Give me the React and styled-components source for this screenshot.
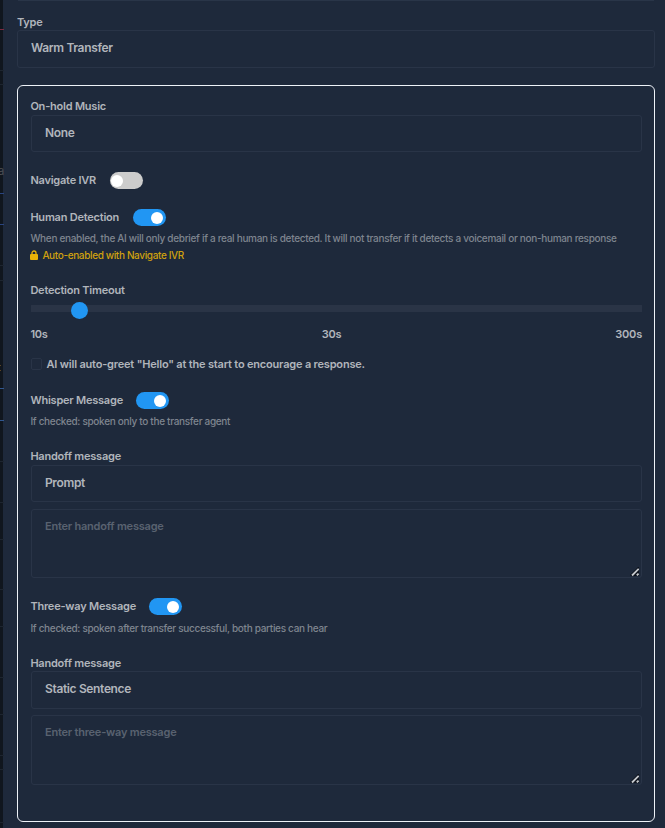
import React, { useState } from "react";
import styled, { createGlobalStyle } from "styled-components";

const Global = createGlobalStyle`
  * { box-sizing: border-box; }
  body { margin: 0; background: #1e293b; overflow: hidden; }
`;

const line = (y, color, width = 4) => `linear-gradient(${color}, ${color}) 0 ${y}px / ${width}px 1px no-repeat`;
const grey = [70, 84, 265, 280, 461, 502, 539, 589, 626, 677, 714, 755, 769, 822];

const Page = styled.div`
  display: grid;
  grid-template-columns: 4px minmax(0, 1fr);
  height: 828px;
  overflow: hidden;
  color: #b1b5bb;
  font: 600 11px/16px Inter, sans-serif;
  letter-spacing: -0.22px;
`;
const Backdrop = styled.div`
  display: flex;
  justify-content: flex-end;
  height: 828px;
  overflow: hidden;
  padding-top: 163px;
  color: #4c4f54;
  font-size: 11px;
  font-weight: 400;
  background: ${[
    line(29, "#7b2a41"),
    line(193, "#2a4580"),
    line(224, "#2a4580"),
    line(365, "#5b4426", 1),
    line(370, "#5b4426", 1),
    line(388, "#31578f"),
    line(420, "#31578f"),
    ...grey.map((y) => line(y, "#1d2530")),
    "linear-gradient(90deg, #10161e 3px, #1e293b 3px)",
  ].join(", ")};
`;
const Panel = styled.main`
  height: 828px;
  padding: 0 10px 0 13px;
`;
const PreviousField = styled.div`
  height: 1px;
  background: #293548;
  margin: 0 1px 13px;
`;
const Label = styled.div`
  height: 16px;
  margin-top: ${(p) => p.$top || 0}px;
  margin-bottom: ${(p) => p.$bottom || 0}px;
`;
const Select = styled.div`
  height: ${(p) => p.$height || 38}px;
  margin-left: ${(p) => p.$inset || 0}px;
  padding: 9px 13px;
  border: 1px solid #293447;
  border-radius: 3px;
  font-size: 12px;
  line-height: 16px;
  letter-spacing: -0.35px;
`;
const Card = styled.section`
  height: 737px;
  margin-top: 17px;
  padding: 12px 12px 0 12.4px;
  border: 1px solid #eef2f8;
  border-radius: 6px;
`;
const ToggleRow = styled.div`
  display: flex;
  align-items: center;
  height: 17px;
  gap: ${(p) => p.$gap}px;
  margin-top: ${(p) => p.$top}px;
`;
const ToggleLabel = styled.span`
  height: 17px;
`;
const Switch = styled.button`
  display: flex;
  justify-content: ${(p) => (p.$on ? "flex-end" : "flex-start")};
  align-items: center;
  width: 33px;
  height: 17px;
  padding: ${(p) => (p.$on ? "1px 3px 0" : "1px 1px 0")};
  border: 0;
  border-radius: 9px;
  background: ${(p) => (p.$on ? "#2196f3" : "#ccc")};
`;
const Knob = styled.span`
  width: 12px;
  height: 12px;
  border-radius: 50%;
  background: #fff;
`;
const Hint = styled.div`
  height: 14px;
  margin-top: ${(p) => p.$top}px;
  margin-bottom: ${(p) => p.$bottom || 0}px;
  color: #7e858f;
  font-size: 10px;
  font-weight: 550;
  line-height: 14px;
  letter-spacing: -0.31px;
  white-space: nowrap;
`;
const Notice = styled(Hint)`
  display: flex;
  align-items: center;
  gap: 4px;
  color: #d0a10e;
  letter-spacing: -0.36px;
`;
const Slider = styled.div`
  display: flex;
  align-items: center;
  height: 17px;
  margin: 4px 0 0 0.6px;
  padding-left: 40px;
  background: linear-gradient(#2a3446, #2a3446) 0 3px / 100% 7px no-repeat;
  border-radius: 4px;
`;
const Thumb = styled.span`
  width: 17px;
  height: 17px;
  border-radius: 50%;
  background: #2196f3;
`;
const Scale = styled.div`
  display: flex;
  justify-content: space-between;
  margin-top: 7px;
`;
const CheckRow = styled.label`
  display: flex;
  align-items: center;
  gap: 4.5px;
  height: 16px;
  margin: 14px 0 0 0.6px;
  letter-spacing: -0.19px;
  white-space: nowrap;
`;
const Check = styled.span`
  width: 11px;
  height: 12px;
  border: 1px solid #293447;
  border-radius: 2px;
`;
const Area = styled.div`
  display: flex;
  justify-content: space-between;
  align-items: flex-start;
  height: ${(p) => p.$height}px;
  margin: ${(p) => p.$top}px 0 0 0.6px;
  padding: 8px 2px 0 13px;
  border: 1px solid #293447;
  border-radius: 3px;
  color: #596270;
  font-size: 11px;
`;
const Grip = styled.svg`
  align-self: flex-end;
  width: 9px;
  height: 10px;
`;

function Toggle({ label, initial, top, gap = 13 }) {
  const [on, setOn] = useState(initial);
  return (
    <ToggleRow $top={top} $gap={gap}>
      <ToggleLabel>{label}</ToggleLabel>
      <Switch $on={on} onClick={() => setOn(!on)} aria-label={label}><Knob /></Switch>
    </ToggleRow>
  );
}

function TextArea({ text, height, top }) {
  return (
    <Area $height={height} $top={top}>
      <span>{text}</span>
      <Grip viewBox="0 0 9 10">
        <path d="M0 8 8 0H9V9H1Z" fill="#0b101a" />
        <path d="M2 8.5 8.7 1.8M6.8 8.4 8.6 6.6" stroke="#c4c7cc" strokeWidth="1.9" />
      </Grip>
    </Area>
  );
}

export default function App() {
  return (
    <Page>
      <Global />
      <Backdrop>a</Backdrop>
      <Panel>
        <PreviousField />
        <Label>Type</Label>
        <Select>Warm Transfer</Select>
        <Card>
          <Label $bottom={1}>On-hold Music</Label>
          <Select $height={37} $inset={0.6}>None</Select>
          <Toggle label="Navigate IVR" top={20} gap={13.7} />
          <Toggle label="Human Detection" initial top={20} gap={13.7} />
          <Hint $top={5} $bottom={1}>When enabled, the AI will only debrief if a real human is detected. It will not transfer if it detects a voicemail or non-human response</Hint>
          <Notice $top={3} $bottom={1}>
            <svg width="8" height="10" viewBox="0 0 8 10" aria-hidden="true">
              <path d="M2 5V3a2 2 0 0 1 4 0v2" fill="none" stroke="#eab308" strokeWidth="1.3" />
              <rect y="4" width="8" height="6" rx="1" fill="#eab308" />
            </svg>
            Auto-enabled with Navigate IVR
          </Notice>
          <Label $top={20}>Detection Timeout</Label>
          <Slider><Thumb /></Slider>
          <Scale><span>10s</span><span>30s</span><span>300s</span></Scale>
          <CheckRow><Check />AI will auto-greet "Hello" at the start to encourage a response.</CheckRow>
          <Toggle label="Whisper Message" initial top={20} />
          <Hint $top={5} $bottom={1}>If checked: spoken only to the transfer agent</Hint>
          <Label $top={20} $bottom={1}>Handoff message</Label>
          <Select $height={37} $inset={0.6}>Prompt</Select>
          <TextArea text="Enter handoff message" height={69} top={7} />
          <Toggle label="Three-way Message" initial top={20} />
          <Hint $top={6} $bottom={1}>If checked: spoken after transfer successful, both parties can hear</Hint>
          <Label $top={20}>Handoff message</Label>
          <Select $height={38} $inset={0.6}>Static Sentence</Select>
          <TextArea text="Enter three-way message" height={70} top={6} />
        </Card>
      </Panel>
    </Page>
  );
}
